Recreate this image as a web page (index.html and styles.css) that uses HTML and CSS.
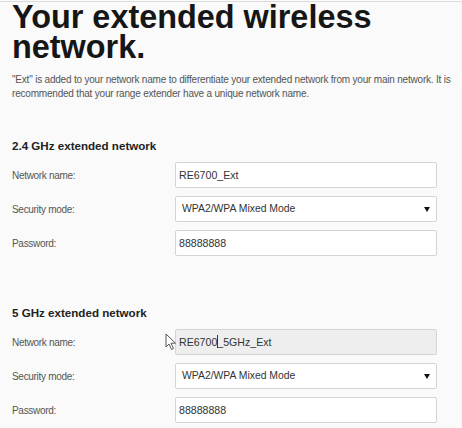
FILE: index.html
```html
<!DOCTYPE html>
<html>
<head>
<meta charset="utf-8">
<link rel="stylesheet" href="styles.css">
</head>
<body>
<div class="page">
  <h1 class="title">Your extended wireless network.</h1>
  <p class="intro">"Ext" is added to your network name to differentiate your extended network from your main network. It is recommended that your range extender have a unique network name.</p>

  <section class="band band-first">
    <h2 class="band-title">2.4 GHz extended network</h2>
    <div class="row">
      <span class="label">Network name:</span>
      <div class="field">RE6700_Ext</div>
    </div>
    <div class="row">
      <span class="label">Security mode:</span>
      <div class="field select">WPA2/WPA Mixed Mode<span class="arrow"></span></div>
    </div>
    <div class="row">
      <span class="label">Password:</span>
      <div class="field">88888888</div>
    </div>
  </section>

  <section class="band band-second">
    <h2 class="band-title">5 GHz extended network</h2>
    <div class="row">
      <span class="label">Network name:</span>
      <div class="field disabled">RE6700<span class="caret"></span>_5GHz_Ext
        <svg class="pointer" width="12" height="18" viewBox="0 0 12 18"><path d="M1 1 L1 14 L4 11 L6.5 16.5 L8.5 15.5 L6 10.2 L10.5 10.2 Z" fill="#fff" stroke="#555" stroke-width="1" stroke-linejoin="round"/></svg>
      </div>
    </div>
    <div class="row">
      <span class="label">Security mode:</span>
      <div class="field select">WPA2/WPA Mixed Mode<span class="arrow"></span></div>
    </div>
    <div class="row">
      <span class="label">Password:</span>
      <div class="field">88888888</div>
    </div>
  </section>
</div>
</body>
</html>
```

FILE: styles.css
```css
html, body {
  margin: 0;
  padding: 0;
  background: #f9faf9;
}
body {
  font-family: "Liberation Sans", Arial, sans-serif;
  color: #333;
  width: 462px;
  height: 428px;
  overflow: hidden;
}
.page {
  border-top: 1px solid #dcdcdc;
  margin-top: 1px;
  padding: 0 0 0 12px;
}
.title {
  margin: 0;
  font-size: 32.4px;
  line-height: 30px;
  font-weight: bold;
  color: #161616;
}
.intro {
  margin: 11px 0 0 0;
  font-size: 10px;
  letter-spacing: -0.2px;
  line-height: 14px;
  color: #555;
  width: 448px;
}
.band-first {
  margin-top: 38px;
}
.band-second {
  margin-top: 50px;
}
.band-title {
  margin: 0 0 9px 0;
  font-size: 11.6px;
  line-height: 14px;
  font-weight: bold;
  color: #222;
}
.row {
  display: grid;
  grid-template-columns: 163px 262px;
  align-items: center;
  margin-bottom: 8px;
}
.label {
  font-size: 10px;
  letter-spacing: -0.3px;
  color: #555;
}
.field {
  position: relative;
  box-sizing: border-box;
  height: 26px;
  border: 1px solid #d4d4d4;
  border-radius: 2px;
  background: #fff;
  padding: 0 3px;
  font-size: 10.6px;
  line-height: 24px;
  color: #333;
}
.field.select {
  padding-left: 6px;
  font-size: 10.4px;
}
.field.disabled {
  background: #eeeeee;
}
.arrow {
  position: absolute;
  right: 6px;
  top: 10px;
  width: 0;
  height: 0;
  border-left: 3px solid transparent;
  border-right: 3px solid transparent;
  border-top: 5px solid #111;
}
.caret {
  display: inline-block;
  width: 1px;
  height: 13px;
  background: #333;
  vertical-align: -2px;
  margin-right: -1px;
}
.pointer {
  position: absolute;
  left: -11px;
  top: 3px;
}
```
